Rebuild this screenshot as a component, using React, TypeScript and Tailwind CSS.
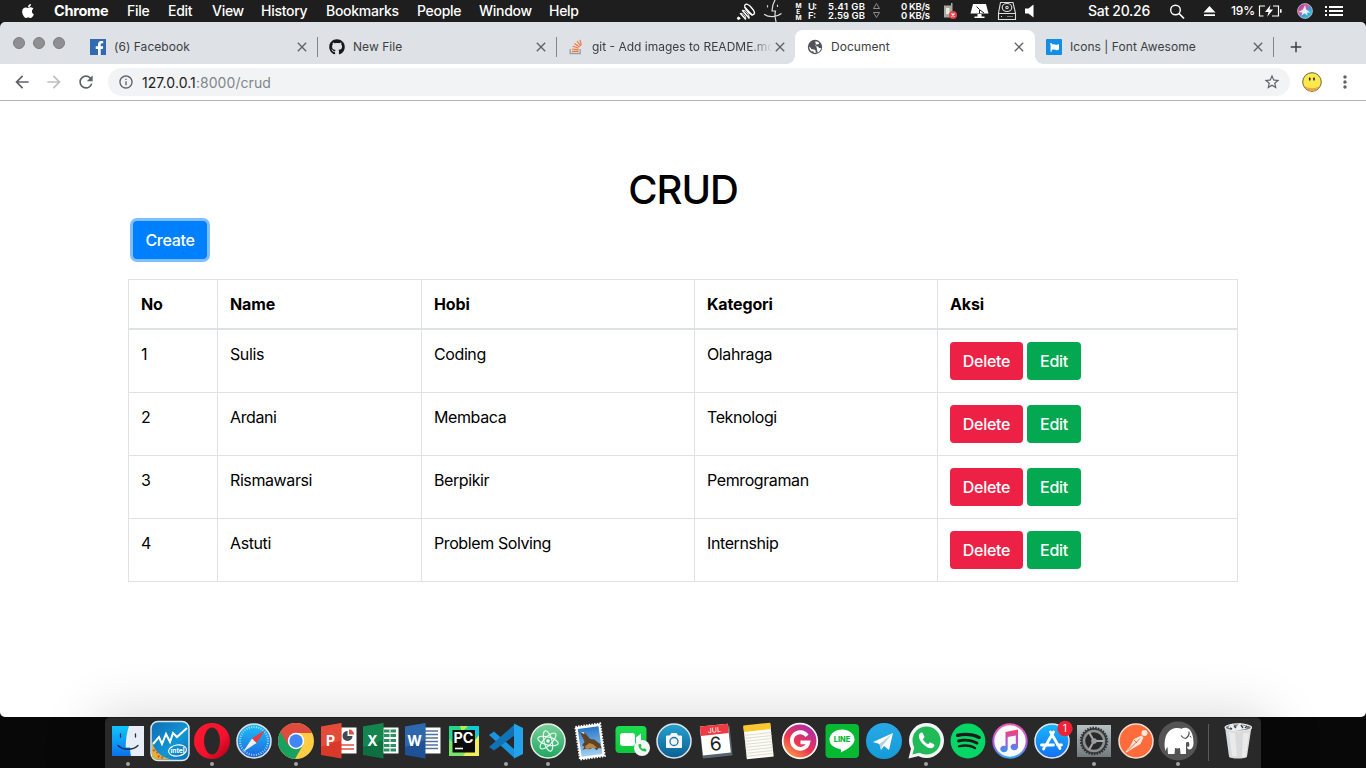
import React from "react";
import {
  FaApple,
  FaGithub,
  FaFacebookF,
  FaSpotify,
  FaFlag,
} from "react-icons/fa";
import {
  MdArrowBack,
  MdArrowForward,
  MdRefresh,
  MdInfoOutline,
  MdStarBorder,
  MdMoreVert,
  MdClose,
  MdAdd,
} from "react-icons/md";

const menus = [
  { label: "File", cls: "w-[41px]" },
  { label: "Edit", cls: "w-[44px]" },
  { label: "View", cls: "w-[49px]" },
  { label: "History", cls: "w-[65px]" },
  { label: "Bookmarks", cls: "w-[91px]" },
  { label: "People", cls: "w-[62px]" },
  { label: "Window", cls: "w-[70px]" },
  { label: "Help", cls: "w-[60px]" },
];

function StatusIcons() {
  return (
    <svg width="310" height="22" viewBox="730 0 310 22" className="shrink-0 font-['Inter',sans-serif] tracking-normal">
      <g fill="none" stroke="#fff" strokeLinecap="round">
        <circle cx="738.6" cy="18.3" r="1.2" fill="#fff" strokeWidth="1" />
        <path d="M740.500 13.500l5 5.500M742.500 10.500l6.500 7.500M745 7.500l7 7.500" strokeWidth="1.500" />
        <path d="M740.500 13.500c1.500-1.500 6.500 3 5 5.500M742.500 10.500c2-2 8 5 6.500 7.500" strokeWidth="1" />
        <ellipse cx="749.500" cy="9.500" rx="2.700" ry="6.500" transform="rotate(-42 749.500 9.500)" strokeWidth="1.400" />
      </g>
      <g fill="none" strokeLinecap="round">
        <path d="M775 0c-2 3.500-3 7-3 11h3.500c-.8 3-.8 6 .5 10.500M764.500 14.500c4 3 12 3 16.500-.8" strokeWidth="1.200" stroke="#ddd" />
        <path d="M767.500 5.500v1.500M777.500 5v1.500" strokeWidth="1.200" stroke="#ccc" />
      </g>
      <g fill="#fff" fontSize="6.500" fontWeight="700">
        <text x="795.500" y="7.500">M</text>
        <text x="796.300" y="13.500">E</text>
        <text x="795.500" y="19.500">M</text>
      </g>
      <g fill="#fff" fontSize="9.500" fontWeight="600">
        <text x="808" y="10" textLength="9">U:</text>
        <text x="808" y="19" textLength="8">F:</text>
        <text x="828" y="10" textLength="37">5.41 GB</text>
        <text x="828" y="19" textLength="37">2.59 GB</text>
        <text x="901" y="10" textLength="29">0 KB/s</text>
        <text x="901" y="19" textLength="29">0 KB/s</text>
      </g>
      <path d="M876.500 3.500l3 5h-6zM876.500 17.500l3-5h-6z" fill="none" stroke="#999" strokeWidth=".9" />
      <path d="M944 5.500h7v-2.500h1.500v14.500h-8.500z" fill="#a9a9a2" />
      <path d="M946 8h3.500v6H946z" fill="#e9e9e2" />
      <circle cx="953" cy="15" r="4" fill="#e2434b" />
      <path d="M951.500 13.500l3 3m0-3l-3 3" stroke="#fff" strokeWidth="1.200" />
      <path d="M973 4h13l2.500 9.500h-18z" fill="#fff" />
      <path d="M977.500 14h4v2.500h3v1.500h-10v-1.500h3z" fill="#fff" />
      <path d="M979.500 13.500V9.500M979.500 9.500l-3-3M980 10l4 3" stroke="#1e1e1e" strokeWidth="1" />
      <g fill="none" stroke="#ddd" strokeWidth="1.100">
        <path d="M1000.500 2.500h12.500l2.500 10.500v6.500h-17V13z" />
        <path d="M998.500 13.500h17M1001 16.500h1" />
        <ellipse cx="1007" cy="7.500" rx="4.800" ry="4" />
        <circle cx="1007" cy="7.500" r="1.200" />
        <path d="M1007.500 16.500h6" strokeDasharray="1 1" />
      </g>
      <path d="M1025 8.500h3.500l5-4v13l-5-4h-3.500z" fill="#fff" />
    </svg>
  );
}

function MenuBar() {
  return (
    <header className="flex h-[22px] w-full shrink-0 items-center bg-[#1e1e1e] text-[14px] leading-[22px] tracking-[-0.28px] text-white">
      <FaApple className="ml-5 size-[16px] shrink-0" />
      <span className="ml-[18px] w-[73px] shrink-0 text-[14.500px] font-bold tracking-[-0.3px]">Chrome</span>
      {menus.map((m) => (
        <span key={m.label} className={"shrink-0 font-medium " + m.cls}>
          {m.label}
        </span>
      ))}
      <div className="ml-[121px] flex items-center">
        <StatusIcons />
      </div>
      <span className="ml-12 w-[81px] shrink-0 font-medium">Sat 20.26</span>
      <svg width="48" height="22" viewBox="1169 0 48 22" className="shrink-0">
        <circle cx="1175.500" cy="10" r="4.800" fill="none" stroke="#fff" strokeWidth="1.400" />
        <path d="M1179 13.500l5 5" stroke="#fff" strokeWidth="1.700" />
        <path d="M1209.500 6l6 6.500h-12zM1204 14.200h11v1.800h-11z" fill="#fff" />
      </svg>
      <span className="ml-[14px] w-[27px] shrink-0 text-[12px] font-medium tracking-[-0.2px]">19%</span>
      <svg width="90" height="22" viewBox="1258 0 90 22" className="shrink-0">
        <defs>
          <linearGradient id="siri" x1="0" y1="0" x2="1" y2="1">
            <stop offset="0" stopColor="#5b3aa5" />
            <stop offset=".35" stopColor="#e0529b" />
            <stop offset=".6" stopColor="#3b9fe0" />
            <stop offset="1" stopColor="#24c8c0" />
          </linearGradient>
        </defs>
        <path d="M1265 6h-5.500v10h4M1273 6h5.500v10h-6.500" fill="none" stroke="#fff" strokeWidth="1.200" />
        <path d="M1280 9.200h1.600v3.600h-1.600z" fill="#fff" />
        <path d="M1270.500 5l-5.500 7h3.600l-1.500 5 6-7.500h-3.600z" fill="#fff" />
        <circle cx="1305" cy="11" r="7.400" fill="url(#siri)" stroke="#ccc" strokeWidth=".8" />
        <path d="M1305 5l1.200 4.500 4.300 3-3.500.3.500 3-3-2.500-3 2.500.8-3.300-4-.6 4.500-2.200z" fill="#fff" opacity=".85" />
        <path d="M1329 7h14M1329 11h14M1329 15h14" stroke="#fff" strokeWidth="1.800" />
        <path d="M1325 7h2M1325 11h2M1325 15h2" stroke="#fff" strokeWidth="1.800" />
      </svg>
    </header>
  );
}

function Tab({ icon, label, cls, active, faded }: { icon: React.ReactNode; label: string; cls: string; active?: boolean; faded?: boolean }) {
  return (
    <div className={"flex h-[34px] shrink-0 items-center " + cls + (active ? " rounded-t-lg bg-white" : "")}>
      {icon}
      <span
        className={
          "ml-2 flex-1 overflow-hidden text-[12px] whitespace-nowrap text-[#3c4043] " +
          (faded ? "tracking-[0px] [mask-image:linear-gradient(to_right,black_88%,transparent)]" : "tracking-[0.05px]")
        }
      >
        {label}
      </span>
      <MdClose className="-mr-px size-4 shrink-0 text-[#5f6368]" />
    </div>
  );
}

const Divider = () => <div className="h-5 w-px shrink-0 bg-[#82868b]" />;

function TabStrip() {
  return (
    <div className="flex h-[42px] shrink-0 items-start bg-[#dee1e6] pt-2">
      <div className="flex h-[26px] w-[90px] shrink-0 items-center gap-2 pl-[13px]">
        <div className="size-3 rounded-full border border-[#7d7d82] bg-[#8e8e93]" />
        <div className="size-3 rounded-full border border-[#7d7d82] bg-[#8e8e93]" />
        <div className="size-3 rounded-full border border-[#7d7d82] bg-[#8e8e93]" />
      </div>
      <div className="flex h-[34px] items-center">
        <Tab
          cls="w-[219px]"
          label="(6) Facebook"
          icon={
            <span className="flex size-4 shrink-0 items-end justify-end bg-[#3169b3] pr-[2px]">
              <FaFacebookF className="h-[14px] w-[9px] text-white" />
            </span>
          }
        />
        <div className="w-2" />
        <Divider />
        <Tab cls="ml-[11px] w-[219px]" label="New File" icon={<FaGithub className="size-4 shrink-0 text-[#16181b]" />} />
        <div className="w-2" />
        <Divider />
        <Tab
          cls="ml-[11px] w-[219px]"
          label="git - Add images to README.md"
          faded
          icon={
            <svg width="16" height="16" viewBox="0 0 16 16" className="shrink-0">
              <path d="M2.200 10v4.500h10V10" fill="none" stroke="#9a9da1" strokeWidth="1.300" />
              <path d="M4 12.400h6.500M4.100 10l6.400.8M4.800 7.200l6 2M6.400 4.400l5.200 3.500M9 2l3.600 5M12 .8l1.200 5.500" stroke="#f4773b" strokeWidth="1.200" />
            </svg>
          }
        />
        <div className="w-2" />
        <div className="flex h-[34px] bg-[radial-gradient(circle_at_0_0,#dee1e6_7.5px,#fff_8px)] bg-[length:8px_8px] bg-[position:0_26px] bg-no-repeat -ml-2 w-2" />
        <Tab
          active
          cls="w-[240px] pr-[9px] pl-3"
          label="Document"
          icon={
            <svg width="16" height="16" viewBox="0 0 16 16" className="shrink-0">
              <circle cx="8" cy="8" r="7.200" fill="#505357" />
              <path d="M8.200 2.500c1.600-.3 3.200.4 4.200 1.500l-1 1.300-2.200.3-1 1.500 2.800.4 1.100 1.500 2.200.2c-.5 1.800-1.700 3.300-3.500 4.200l-2.300.2.200-1.900-1.300-1.200-2.800-.3L3.300 8.600 2.200 7.600c0 2 .7 3.700 2.100 4.700l2.200.3.300 1.200c1.500.2 2.600 0 3.800-.6" fill="#fff" />
            </svg>
          }
        />
        <div className="h-[34px] w-2 bg-[radial-gradient(circle_at_100%_0,#dee1e6_7.5px,#fff_8px)] bg-[length:8px_8px] bg-[position:0_26px] bg-no-repeat" />
        <Tab
          cls="ml-[3px] w-[219px]"
          label="Icons | Font Awesome"
          icon={
            <span className="flex size-4 shrink-0 items-center justify-center rounded-[1px] bg-[#148ee5]">
              <FaFlag className="size-[9px] text-white" />
            </span>
          }
        />
        <div className="w-2" />
        <Divider />
        <MdAdd className="ml-[13px] size-[18px] text-[#3c4043]" />
      </div>
    </div>
  );
}

function Toolbar() {
  return (
    <div className="flex h-[37px] shrink-0 items-center border-b border-[#b3b4b6] bg-white text-[#5f6368]">
      <MdArrowBack className="ml-3 size-5" />
      <MdArrowForward className="ml-3 size-5 text-[#bdbfc2]" />
      <MdRefresh className="ml-3 size-5" />
      <div className="ml-3 flex h-7 w-[1182px] items-center rounded-full bg-[#f1f3f4] pr-[9px] pl-[10px]">
        <MdInfoOutline className="size-4" />
        <span className="ml-2 flex-1 text-[14px] tracking-[0.07px] text-[#202124]">
          127.0.0.1<span className="text-[#80868b]">:8000/crud</span>
        </span>
        <MdStarBorder className="size-[18px]" />
      </div>
      <svg width="20" height="20" viewBox="0 0 20 20" className="ml-3">
        <circle cx="10" cy="10" r="9.300" fill="#fbe94d" stroke="#6b6238" strokeWidth="1" />
        <path d="M1.500 12.500c2.500 8.500 14.500 8.500 17 0-3 5-14 5-17 0z" fill="#f2a33a" />
        <ellipse cx="7.700" cy="7" rx=".9" ry="1.800" fill="#222" />
        <ellipse cx="12" cy="7" rx=".9" ry="1.800" fill="#222" />
      </svg>
      <MdMoreVert className="ml-[13px] size-5" />
    </div>
  );
}

const rows = [
  ["1", "Sulis", "Coding", "Olahraga"],
  ["2", "Ardani", "Membaca", "Teknologi"],
  ["3", "Rismawarsi", "Berpikir", "Pemrograman"],
  ["4", "Astuti", "Problem Solving", "Internship"],
];

function Content() {
  return (
    <main className="flex-1 bg-white px-32 pt-[65px] text-[16px] leading-6 tracking-[-0.2px] text-black">
      <h1 className="text-center text-[40px] leading-[48px] font-medium tracking-[-1.1px]">CRUD</h1>
      <button className="mt-[7px] ml-[5px] block h-[38px] w-[74px] rounded-[4px] bg-[#007fff] font-medium tracking-[-0.3px] text-white shadow-[0_0_0_3px_#80bfff]">
        Create
      </button>
      <table className="mt-5 w-[1109px] table-fixed border-collapse border border-[#dee2e6]">
        <colgroup>
          <col className="w-[89px]" />
          <col className="w-[204px]" />
          <col className="w-[273px]" />
          <col className="w-[243px]" />
          <col className="w-[300px]" />
        </colgroup>
        <thead>
          <tr>
            {["No", "Name", "Hobi", "Kategori", "Aksi"].map((h) => (
              <th key={h} className="border border-b-2 border-[#dee2e6] p-3 text-left font-bold tracking-[-0.15px]">
                {h}
              </th>
            ))}
          </tr>
        </thead>
        <tbody>
          {rows.map((r) => (
            <tr key={r[0]}>
              {r.map((c) => (
                <td key={c} className="border border-[#dee2e6] p-3 align-top tracking-[-0.4px]">
                  {c}
                </td>
              ))}
              <td className="border border-[#dee2e6] p-3 align-top">
                <div className="flex gap-1 font-medium tracking-[-0.3px] text-white">
                  <button className="h-[38px] w-[73px] rounded-[4px] bg-[#ed2045]">Delete</button>
                  <button className="h-[38px] w-[54px] rounded-[4px] bg-[#03a850]">Edit</button>
                </div>
              </td>
            </tr>
          ))}
        </tbody>
      </table>
    </main>
  );
}

const Office = ({ letter, dark, light, children }: { letter: string; dark: string; light: string; children?: React.ReactNode }) => (
  <>
    <path d="M23 10.500h16.500v26H23z" fill="#fff" />
    {children}
    <path d="M4 9.500L24.500 6v35.500L4 38z" fill={dark} />
    <path d="M4 9.500L24.500 6v17L4 30z" fill={light} opacity=".5" />
    <text x="13.500" y="29" fontSize="14" fontWeight="700" fill="#fff" textAnchor="middle">
      {letter}
    </text>
  </>
);

const ticks = Array.from({ length: 36 }, (_, i) => i * 10);

const dockIcons: { name: string; run?: boolean; art: React.ReactNode }[] = [
  {
    name: "finder",
    run: true,
    art: (
      <>
        <rect x="5" y="9" width="32" height="30" fill="url(#finder)" />
        <path d="M22 9h15v30H24c-.8-3-1-6-.8-8.500h-4.500C18.700 22 20 15 22 9z" fill="#e8eef6" />
        <path d="M13.500 17v3M28.500 17v3" stroke="#16324f" strokeWidth="1.300" strokeLinecap="round" />
        <path d="M11 28.500c5 5 15 5 20 0" fill="none" stroke="#16324f" strokeWidth="1.300" strokeLinecap="round" />
      </>
    ),
  },
  {
    name: "intel",
    art: (
      <>
        <rect x="2" y="4.500" width="38" height="39" rx="7" fill="url(#intel)" stroke="#d8e6f0" strokeWidth="1.500" />
        <path d="M3 25c2 8 8 15 19 17.500H9c-4 0-6-2-6-5z" fill="#e0b13c" />
        <path d="M4 33l4 2 2 5 6 1" fill="none" stroke="#d4582c" strokeWidth="2" strokeDasharray="2 2" />
        <path d="M4 27l6-7 3 7 4-10 4 8 3-9 4 4 10-9" fill="none" stroke="#fff" strokeWidth="2" />
        <ellipse cx="28.500" cy="33.500" rx="9" ry="5.500" fill="none" stroke="#fff" strokeWidth="1.100" transform="rotate(-8 28.500 33.500)" />
        <text x="21.500" y="36" fontSize="7" fontWeight="700" fill="#fff" textLength="14" lengthAdjust="spacingAndGlyphs">
          intel
        </text>
      </>
    ),
  },
  {
    name: "opera",
    run: true,
    art: (
      <>
        <circle cx="21" cy="24" r="18" fill="url(#opera)" />
        <ellipse cx="21" cy="24" rx="8" ry="13.500" fill="#292929" />
      </>
    ),
  },
  {
    name: "safari",
    art: (
      <>
        <circle cx="21" cy="24" r="17" fill="url(#safari)" stroke="#dfe3e6" strokeWidth="1.500" />
        {ticks.map((a) => (
          <path key={a} d="M21 9v2" stroke="#d7eefc" strokeWidth=".7" transform={`rotate(${a} 21 24)`} />
        ))}
        <path d="M32 13L19 21.500l4.500 4.500z" fill="#f03a3a" />
        <path d="M10 35l9-13.500 4.500 4.500z" fill="#eee" />
      </>
    ),
  },
  {
    name: "chrome",
    run: true,
    art: (
      <>
        <circle cx="21" cy="24" r="18" fill="#ffcd45" />
        <path d="M21 24L5.410 15A18 18 0 0 0 20 42l8-14z" fill="#19a15f" />
        <path d="M21 24l-7.500 4.500L5.410 15A18 18 0 0 1 37 16H21z" fill="#de4b3f" />
        <circle cx="21" cy="24" r="8.200" fill="#fff" />
        <circle cx="21" cy="24" r="6.700" fill="#4285f4" />
      </>
    ),
  },
  {
    name: "powerpoint",
    art: (
      <Office letter="P" dark="#d9392b" light="#f0604a">
        <path d="M30.500 14a5 5 0 1 0 5 5h-5z" fill="#404a52" />
        <path d="M32 12.500v5h5a5 5 0 0 0-5-5z" fill="#e2503f" />
        <path d="M24 28h13M24 32h13" stroke="#e2503f" strokeWidth="1.500" />
      </Office>
    ),
  },
  {
    name: "excel",
    art: (
      <Office letter="X" dark="#0c7040" light="#1c9a5b">
        <path d="M25 14h12M25 18.500h12M25 23.500h12M25 28.500h12M25 33h12" stroke="#2f8f63" strokeWidth="3" />
        <path d="M31 12v23" stroke="#fff" strokeWidth="1" />
      </Office>
    ),
  },
  {
    name: "word",
    art: (
      <Office letter="W" dark="#1e5196" light="#3c7fc6">
        <path d="M24 14h13M24 17.500h13M24 21h13M24 24.500h13M24 28h13M24 31.500h13" stroke="#53719a" strokeWidth="1.500" />
      </Office>
    ),
  },
  {
    name: "pycharm",
    art: (
      <>
        <rect x="6" y="9" width="30" height="30" fill="#21d789" />
        <path d="M6 22v17h24z" fill="#7be36b" />
        <path d="M24 9h12v14z" fill="#12c9d8" />
        <path d="M36 18v21H20z" fill="#f1ee5b" />
        <path d="M17 9h8l-6 6z" fill="#b8ec4e" />
        <rect x="9.500" y="13" width="22.500" height="22.500" fill="#0b0b0b" />
        <text x="10.500" y="25.800" fontSize="14" fontWeight="700" fill="#fff" textLength="20" lengthAdjust="spacingAndGlyphs">
          PC
        </text>
        <path d="M12 31.500h8" stroke="#fff" strokeWidth="1.600" />
      </>
    ),
  },
  {
    name: "vscode",
    run: true,
    art: (
      <>
        <path d="M4 18l5-3.500L30 33v8.500z" fill="#1a94dc" />
        <path d="M30 7v11L9 33.500 4 30z" fill="#1173b5" />
        <path d="M29 6.500l9 4.500v26l-9 4.500z" fill="#23a3ec" />
      </>
    ),
  },
  {
    name: "atom",
    run: true,
    art: (
      <>
        <circle cx="21" cy="24" r="17" fill="url(#atom)" stroke="#e3efe8" strokeWidth="1.500" />
        <g fill="none" stroke="#e8fff2" strokeWidth="1.100">
          <ellipse cx="21" cy="24" rx="4" ry="10.500" transform="rotate(-15 21 24)" />
          <ellipse cx="21" cy="24" rx="4" ry="10.500" transform="rotate(45 21 24)" />
          <ellipse cx="21" cy="24" rx="4" ry="10.500" transform="rotate(105 21 24)" />
        </g>
        <circle cx="21" cy="24" r="1.700" fill="#fff" />
      </>
    ),
  },
  {
    name: "mail",
    art: (
      <g transform="rotate(-8 21 24)">
        <rect x="8.500" y="8" width="25" height="33" fill="#fff" stroke="#fff" strokeWidth="2" strokeDasharray="1.500 1.200" />
        <rect x="10.500" y="10.500" width="21" height="28" fill="url(#stamp)" />
        <path d="M12.500 14l5 2 4 6 4 1 5 5 1 5-3-1-2 2-3-3-4 1-4-1-3 1 2-3-2-2 3-3z" fill="#5e4327" />
        <path d="M15 29l5-3 4 2 3 4-6-1-4 1z" fill="#b78443" />
        <path d="M13 14l3 .5.500 2z" fill="#f1ede2" />
      </g>
    ),
  },
  {
    name: "facetime",
    art: (
      <>
        <rect x="4.500" y="9" width="31" height="27" rx="4" fill="url(#green)" />
        <rect x="9" y="16" width="15" height="13" rx="3" fill="#fff" />
        <path d="M25 20.500l5-4v12l-5-4z" fill="#fff" />
        <circle cx="31" cy="31" r="8" fill="#f3f5f4" />
        <path d="M27.500 27.500c-.5 3.500 3.500 7.500 7.500 7l.5-2-2.300-1.200-1.200.8c-1-.4-1.700-1.200-2.200-2.200l.8-1.200-1.100-2z" fill="#19c24a" />
      </>
    ),
  },
  {
    name: "camera",
    art: (
      <>
        <circle cx="21" cy="24" r="17" fill="url(#cam)" stroke="#dfe5e8" strokeWidth="1.500" />
        <path d="M13.500 19h3.500l1.500-2.500h5l1.500 2.500h3.500v11.500h-15z" fill="#f4f6f7" stroke="#f4f6f7" strokeLinejoin="round" />
        <circle cx="21" cy="24.500" r="4" fill="none" stroke="#1878a8" strokeWidth="1.300" />
      </>
    ),
  },
  {
    name: "calendar",
    art: (
      <g transform="rotate(-6 21 24)">
        <rect x="6" y="10" width="30" height="30" rx="1" fill="#59646e" />
        <rect x="6.500" y="8" width="28" height="29" fill="#fff" />
        <path d="M6.500 8h28v9.500h-28z" fill="#ee3a40" />
        <text x="20.500" y="15.500" fontSize="7" fill="#fff" textAnchor="middle">
          JUL
        </text>
        <text x="20.500" y="33.500" fontSize="19" fontWeight="400" fill="#222" textAnchor="middle">
          6
        </text>
      </g>
    ),
  },
  {
    name: "notes",
    art: (
      <g transform="rotate(-6 21 24)">
        <rect x="8" y="8" width="27" height="33" fill="#fdfcf5" />
        <path d="M8 7h27v6.500H8z" fill="#fbc731" />
        <path d="M8 17h27M8 20h27M8 23h27M8 26h27M8 29h27M8 32h27M8 35h27M8 38h27" stroke="#d6d5cf" strokeWidth=".8" />
      </g>
    ),
  },
  {
    name: "grids",
    art: (
      <>
        <circle cx="21" cy="24" r="17.300" fill="url(#insta)" stroke="#fff" strokeWidth="1.700" />
        <path d="M28 18.800A8.300 8.300 0 1 0 29.300 25.300H21.500" fill="none" stroke="#fff" strokeWidth="3.800" />
      </>
    ),
  },
  {
    name: "line",
    art: (
      <>
        <rect x="4.500" y="7" width="33.500" height="34" rx="4" fill="#05ba32" />
        <path d="M21 12.500c-7 0-12.500 4.500-12.500 10 0 5 4.500 8.500 10.500 9.500 1.500.4 1 2 .8 3.600C26 32.500 33.500 28 33.500 22.500c0-5.500-5.500-10-12.500-10z" fill="#fff" />
        <text x="12.800" y="25" fontSize="7.500" fontWeight="800" fill="#05b830" textLength="16.500" lengthAdjust="spacingAndGlyphs">
          LINE
        </text>
      </>
    ),
  },
  {
    name: "telegram",
    art: (
      <>
        <circle cx="21" cy="24" r="18" fill="url(#tele)" />
        <path d="M10 25l20-9-4 17-5-4-3 4-1.500-6z" fill="#fff" />
        <path d="M16.500 27L30 16 19.500 28.500 18 33z" fill="#b9cfe0" />
      </>
    ),
  },
  {
    name: "whatsapp",
    run: true,
    art: (
      <>
        <circle cx="21.500" cy="23.500" r="17.500" fill="#f4f6f5" />
        <path d="M3.500 41.500l3-12 9.500 9z" fill="#f4f6f5" />
        <circle cx="21.500" cy="23.500" r="14" fill="#20bb58" />
        <path d="M7.500 37.500l2-8 6 6z" fill="#20bb58" />
        <path d="M15.500 16c-3 2-1.500 6.500 2 10.500 4 4 8 6 10.500 4 2-1.600 1.600-3 .5-3.600l-3-1.500c-1-.4-1.500 1.800-2.500 1.600-1.500-.3-4.500-3.200-5-4.600-.2-.8 1.800-1.500 1.400-2.600l-1.500-3.500c-.5-1-1.500-.9-2.400-.3z" fill="#fff" />
      </>
    ),
  },
  {
    name: "spotify",
    art: (
      <>
        <circle cx="21" cy="24" r="16" fill="#1b1b1b" />
        <FaSpotify x="3" y="6" size={36} color="#05d665" />
      </>
    ),
  },
  {
    name: "music",
    art: (
      <>
        <circle cx="21" cy="24" r="16.700" fill="#fafafa" stroke="url(#music)" strokeWidth="2" />
        <path d="M16.500 15l12.500-2.500v17.500a3.700 3.300 0 1 1-2.200-3V18.500l-8.100 1.500V32a3.700 3.300 0 1 1-2.200-3z" fill="url(#note)" />
      </>
    ),
  },
  {
    name: "appstore",
    art: (
      <>
        <circle cx="21" cy="24" r="17" fill="url(#store)" stroke="#dfe8ef" strokeWidth="1.500" />
        <g stroke="#fff" strokeWidth="2.800" strokeLinecap="round">
          <path d="M19.500 15l9.500 16.500M22.500 15L14.500 29M10.500 28h12M26.500 28h4M12.500 32l.6-1" />
        </g>
        <circle cx="34" cy="11.500" r="7.700" fill="#ef2137" />
        <text x="33.700" y="15" fontSize="10" fill="#fff" textAnchor="middle">
          1
        </text>
      </>
    ),
  },
  {
    name: "settings",
    run: true,
    art: (
      <>
        <rect x="4" y="8" width="34" height="32" fill="url(#steel)" />
        <circle cx="21" cy="24" r="13" fill="#3a3c3e" stroke="#303234" strokeWidth="2.500" strokeDasharray="1.500 1.200" />
        <circle cx="21" cy="24" r="10" fill="#29292a" stroke="#8d9091" strokeWidth="2.500" />
        <path d="M21 24h10M21 24l-5-8.700M21 24l-5 8.700" stroke="#a4a7a8" strokeWidth="2" />
        <circle cx="21" cy="24" r="2.800" fill="#9b9ea0" />
      </>
    ),
  },
  {
    name: "postman",
    art: (
      <>
        <circle cx="21" cy="24" r="17" fill="#ff6c3c" stroke="#f6ddd3" strokeWidth="1.500" />
        <circle cx="29.500" cy="16" r="3" fill="#ffe7dc" />
        <path d="M10.500 35l4.500-5.500 4-7.500 7.500-3.500 2 2-3 6.500-6 3.500-8 5z" fill="#ffe7dc" />
        <path d="M13 33.500l12-12M19 23l3 3" stroke="#e65a2e" strokeWidth=".9" />
      </>
    ),
  },
  {
    name: "mamp",
    run: true,
    art: (
      <>
        <circle cx="21" cy="24" r="19.500" fill="#545454" />
        <path
          d="M11 37l-.5-7c-1 1-1.500 2.500-2 4-.8-3-1.200-6-.8-9C8.500 17 12 12 19 11c2-.3 4 0 5.500.8 2.500-1.600 6-1.300 8 .7 3 3 4 8.500 4 13.500 0 3.500-1.500 6.500-4 6.500-1.800 0-2.500-1.500-2.500-3 .8.600 1.800.5 2.200-.5.4-1.300 0-3-.7-4.200l-2.500.8L29 37h-5.500l-.5-6c-1.500.6-3.500.6-5 0l-.5 6z"
          fill="#fff"
        />
        <path d="M32 14.500c.5 3-1 5.500-3.500 7-2-.2-3.500-1.500-4.500-3" fill="none" stroke="#545454" strokeWidth="1.200" />
        <path d="M33 19l1 1.500" stroke="#545454" strokeWidth="1" />
      </>
    ),
  },
];

function Dock() {
  return (
    <footer className="flex h-[51px] shrink-0 justify-start bg-[#080808] pl-[105px]">
      <div className="flex w-[1156px] rounded-t-[5px] border-t border-[#1c1c1c] bg-[#292929] pl-[2px] shadow-[0_8px_55px_10px_rgba(0,0,0,0.16)]">
        <svg width="0" height="0" className="shrink-0">
          <defs>
            <linearGradient id="finder" x2="0" y2="1"><stop stopColor="#12c5fb" /><stop offset="1" stopColor="#0b71ee" /></linearGradient>
            <linearGradient id="intel" x2="1" y2="1"><stop stopColor="#0f6db5" /><stop offset=".6" stopColor="#1196d4" /><stop offset="1" stopColor="#0a6fb4" /></linearGradient>
            <linearGradient id="opera" x2="1" y2="1"><stop stopColor="#ff1b2d" /><stop offset=".6" stopColor="#f2112e" /><stop offset="1" stopColor="#a70014" /></linearGradient>
            <linearGradient id="safari" x2="0" y2="1"><stop stopColor="#1fc0f7" /><stop offset="1" stopColor="#1c68dd" /></linearGradient>
            <linearGradient id="atom" x2="0" y2="1"><stop stopColor="#7ccf9a" /><stop offset="1" stopColor="#1fa660" /></linearGradient>
            <linearGradient id="stamp" x2="0" y2="1"><stop stopColor="#2b76c9" /><stop offset="1" stopColor="#9fd0f2" /></linearGradient>
            <linearGradient id="green" x2="0" y2="1"><stop stopColor="#1edc50" /><stop offset="1" stopColor="#0cc83c" /></linearGradient>
            <linearGradient id="cam" x2="0" y2="1"><stop stopColor="#27a2cf" /><stop offset="1" stopColor="#0c5f94" /></linearGradient>
            <linearGradient id="insta" x1=".1" y1="1" x2=".8" y2="0"><stop stopColor="#fdb040" /><stop offset=".45" stopColor="#ee3550" /><stop offset="1" stopColor="#a62bb5" /></linearGradient>
            <linearGradient id="tele" x2="0" y2="1"><stop stopColor="#27a9e8" /><stop offset="1" stopColor="#149bd7" /></linearGradient>
            <linearGradient id="music" x2="0" y2="1"><stop stopColor="#ef5bb2" /><stop offset=".6" stopColor="#a55be8" /><stop offset="1" stopColor="#39a8ef" /></linearGradient>
            <linearGradient id="note" x2="0" y2="1"><stop stopColor="#fa3f65" /><stop offset=".5" stopColor="#b157d9" /><stop offset="1" stopColor="#2f96f0" /></linearGradient>
            <linearGradient id="store" x2="0" y2="1"><stop stopColor="#19b8fb" /><stop offset="1" stopColor="#136ff2" /></linearGradient>
            <linearGradient id="steel" x2="0" y2="1"><stop stopColor="#b9c0c4" /><stop offset="1" stopColor="#737a7e" /></linearGradient>
          </defs>
        </svg>
        {dockIcons.map((d) => (
          <svg key={d.name} width="42" height="50" viewBox="0 1 42 50" className="shrink-0 font-['Inter',sans-serif]">
            {d.art}
            {d.run && <circle cx="21" cy="47" r="2" fill="#a3a3a3" />}
          </svg>
        ))}
        <div className="mt-[6px] ml-[9px] h-[37px] w-px bg-[#5a5a5a]" />
        <svg width="42" height="50" viewBox="0 1 42 50" className="ml-2 shrink-0">
          <path d="M8 10l4 29.500c.5 2.800 17.500 2.800 18 0L34.500 10z" fill="#d9dadb" />
          <path d="M12 15l3 24h5l-2-23zM26 16l-1 24h4l3-24z" fill="#eeeeef" opacity=".8" />
          <ellipse cx="21.300" cy="10.500" rx="13.200" ry="3.600" fill="#777b80" stroke="#ededed" strokeWidth="1.200" />
          <path d="M11 10l4-3 4 3 4-4 4 3 4-1-2 4-6 1-7 1z" fill="#eef0f2" />
          <path d="M17 9l2 2M24 8l2 3M28 11l2-2M13 11l2 1" stroke="#394651" strokeWidth="1.500" />
        </svg>
      </div>
    </footer>
  );
}

export default function App() {
  return (
    <div className="flex h-[768px] w-[1366px] flex-col overflow-hidden bg-[#080808] font-['Inter','Liberation_Sans',sans-serif]">
      <MenuBar />
      <div className="flex min-h-0 flex-1 flex-col overflow-hidden rounded-[5px]">
        <TabStrip />
        <Toolbar />
        <Content />
      </div>
      <Dock />
    </div>
  );
}
